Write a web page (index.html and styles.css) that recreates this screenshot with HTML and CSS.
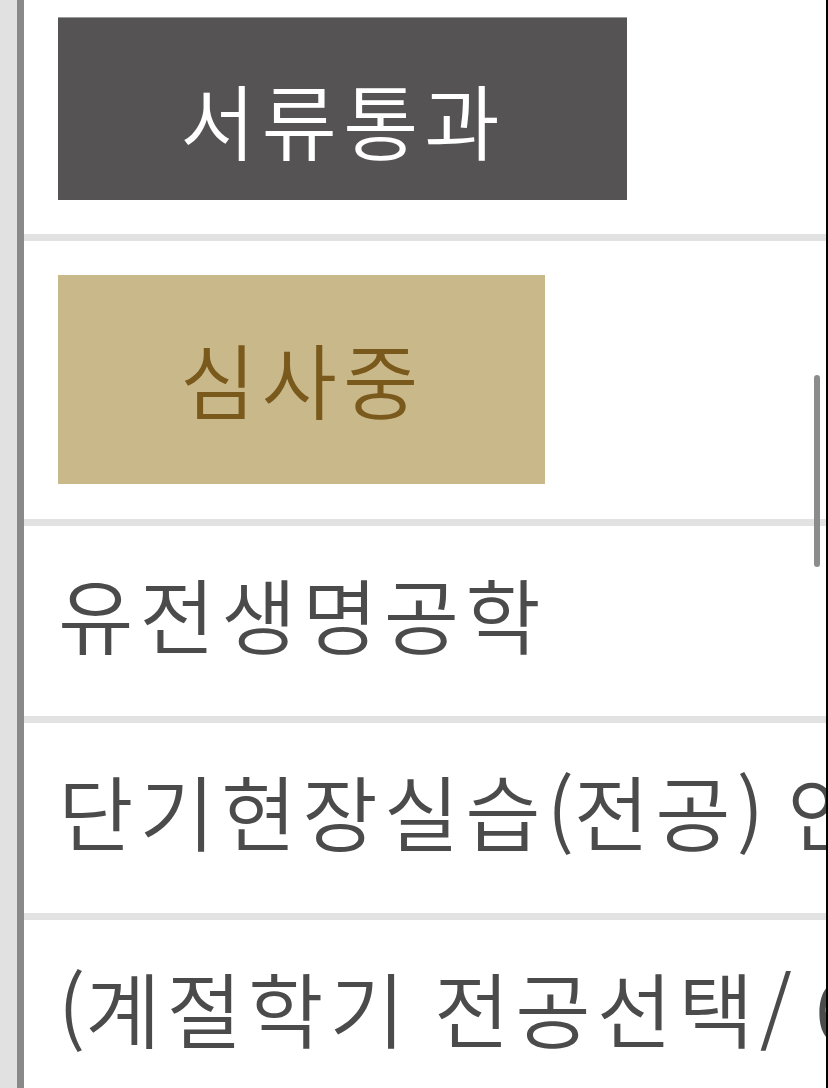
FILE: index.html
```html
<!DOCTYPE html>
<html lang="ko">
<head>
<meta charset="utf-8">
<title>지원 현황</title>
<link rel="stylesheet" href="styles.css">
</head>
<body>
<div class="screen">
  <div class="gutter"></div>
  <div class="list">
    <div class="row row-first"><span class="badge badge-pass">서류통과</span></div>
    <div class="row row-second"><span class="badge badge-review">심사중</span></div>
    <div class="row row-text">유전생명공학</div>
    <div class="row row-text">단기현장실습<span class="latin">(</span>전공<span class="latin">) </span>인턴십</div>
    <div class="row row-text"><span class="latin">(</span>계절학기<span class="latin"> </span>전공선택<span class="latin">/ 6</span>학점<span class="latin">)</span></div>
  </div>
  <div class="edge"></div>
  <div class="scrollbar"></div>
</div>
</body>
</html>
```

FILE: styles.css
```css
html, body {
  margin: 0;
  padding: 0;
  background: #fff;
}

.screen {
  position: relative;
  display: flex;
  width: 828px;
  height: 1088px;
  overflow: hidden;
  font-family: "Noto Sans CJK KR", "Noto Sans", sans-serif;
  font-weight: 350;
  letter-spacing: 6px;
}

.gutter {
  flex: 0 0 17px;
  background: #e1e1e1;
}

.list {
  flex: 1 1 auto;
  min-width: 0;
  background: #fff;
  border-left: 7px solid #898989;
  overflow: hidden;
}

.edge {
  flex: 0 0 2px;
  background: #000;
}

.row {
  display: flex;
  align-items: center;
  padding: 0 34px;
  border-bottom: 7px solid #e2e2e2;
  white-space: pre;
}

.row-first {
  padding-top: 17px;
  padding-bottom: 34px;
}

.row-second {
  padding-top: 34px;
  padding-bottom: 35px;
}

.badge {
  display: block;
  font-size: 82px;
  padding: 0 121px 0 122px;
}

.badge-pass {
  background: #555354;
  color: #ffffff;
  padding-top: 20px;
  line-height: 162px;
  border-top: 1px solid #9a9a9a;
}

.badge-review {
  background: #c9b98a;
  color: #7a5a1c;
  padding-bottom: 4px;
  line-height: 205px;
}

.row-text {
  height: 172px;
  padding-bottom: 18px;
  font-size: 82px;
  color: #4b4b4b;
}

.latin {
  letter-spacing: 0;
}

.scrollbar {
  position: absolute;
  left: 814px;
  top: 375px;
  width: 6px;
  height: 192px;
  border-radius: 3px;
  background: #8c8c8c;
}
```
